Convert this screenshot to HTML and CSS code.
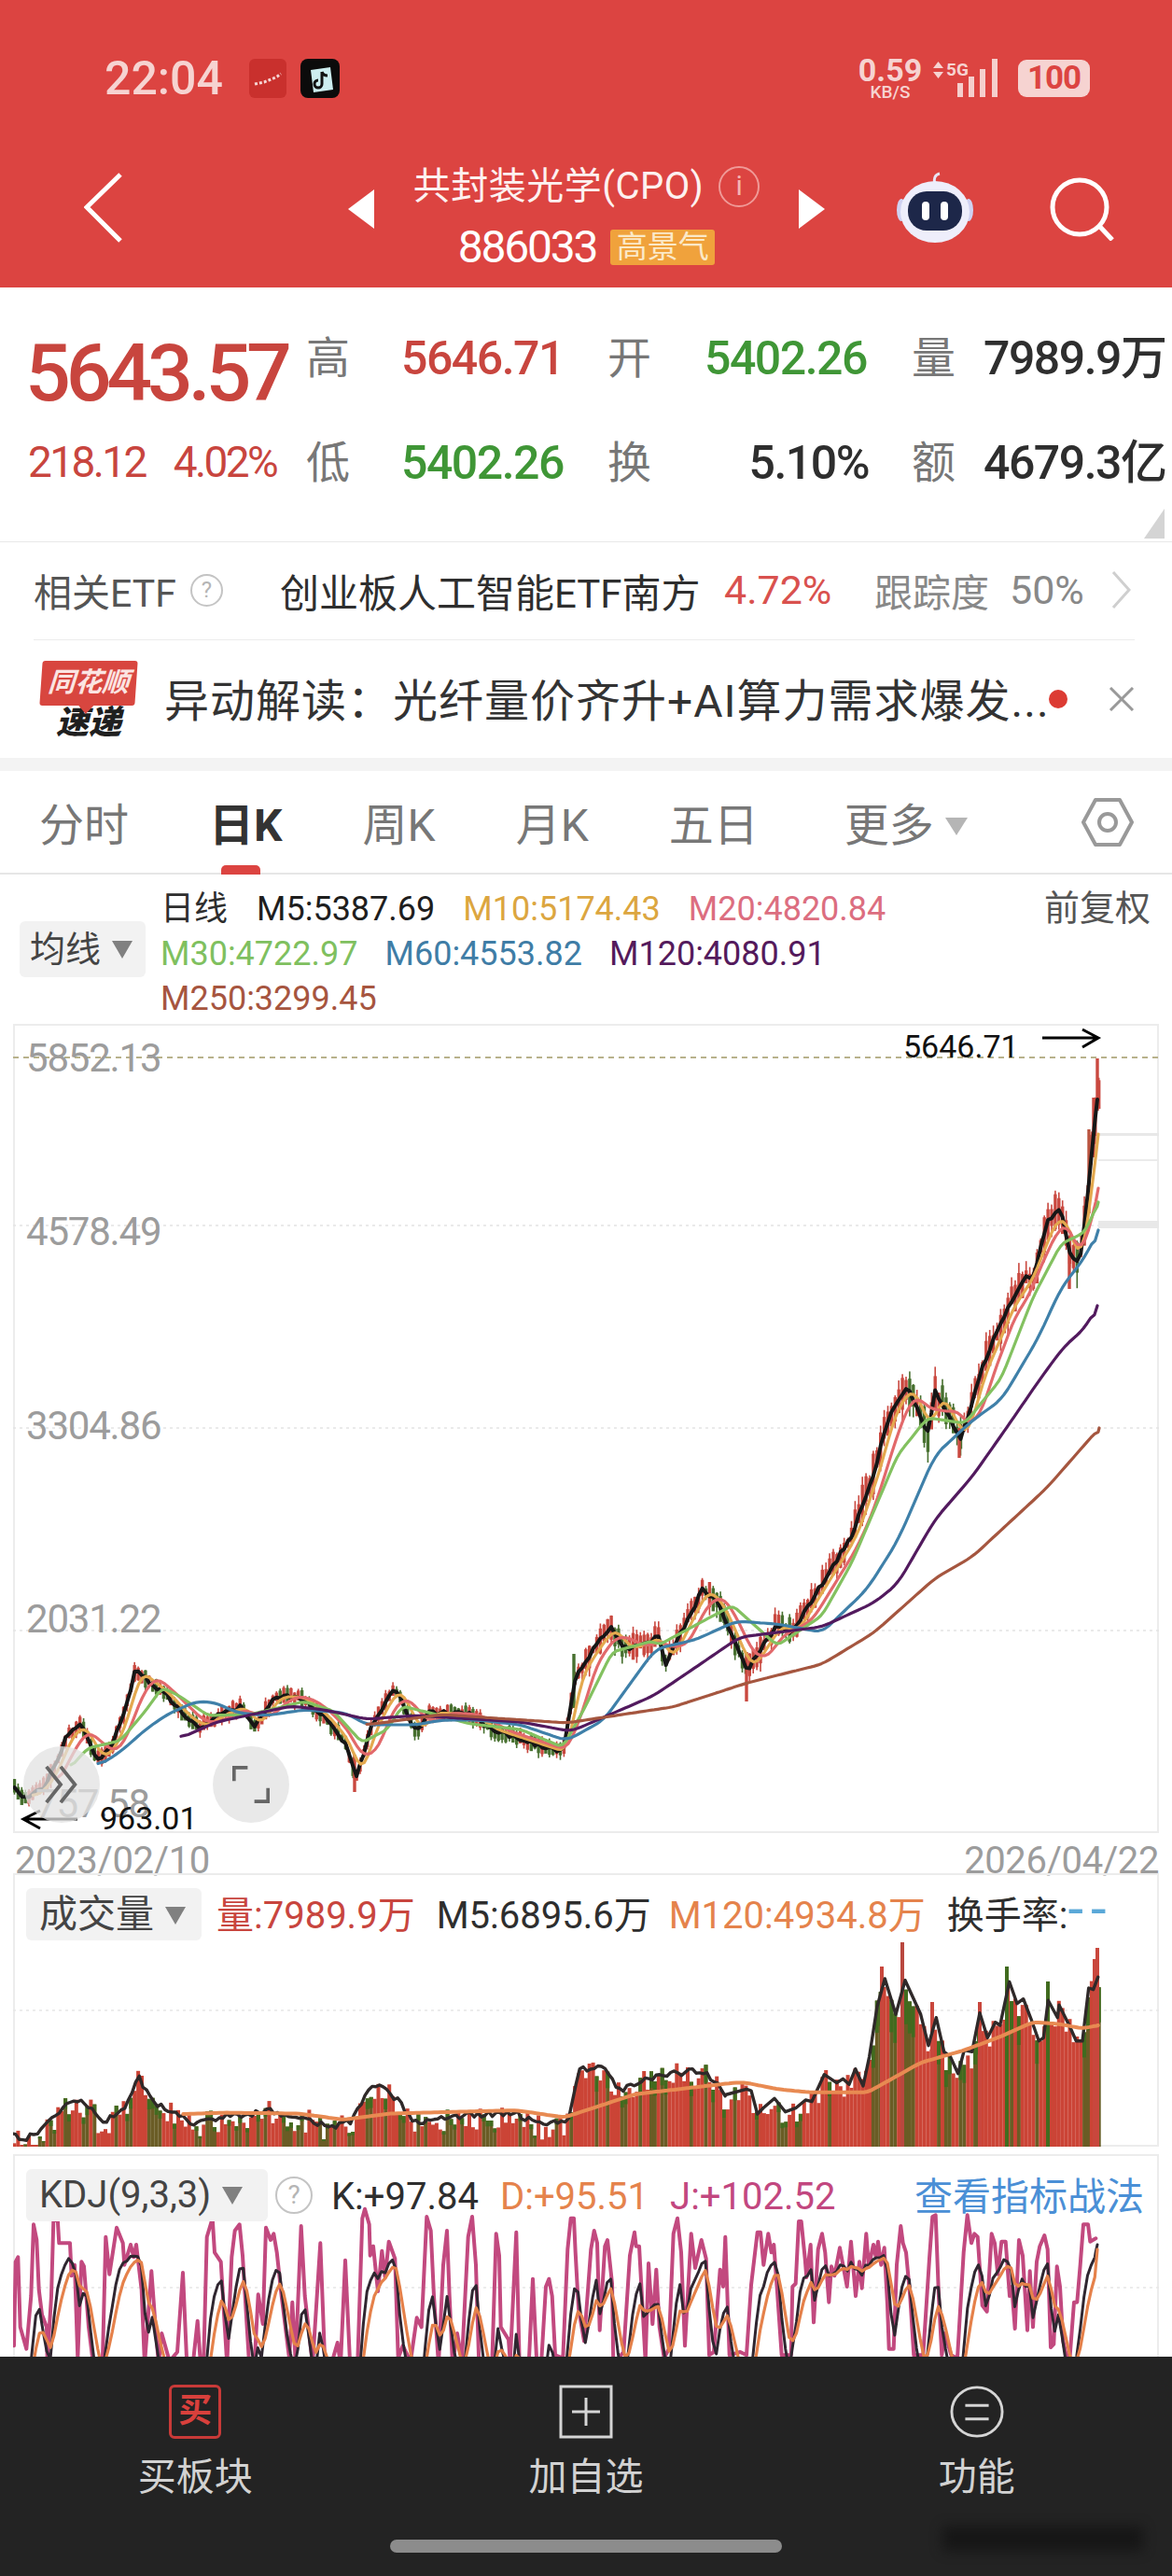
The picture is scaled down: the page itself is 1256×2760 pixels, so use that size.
FILE: index.html
```html
<!DOCTYPE html>
<html lang="zh-CN">
<head>
  <meta charset="UTF-8" />
  <meta name="viewport" content="width=device-width, initial-scale=1.0" />
  <title>共封装光学(CPO)</title>
  <link rel="stylesheet" href="styles.css">
</head>
<body>
  <div class="page">
    <header class="top">
      <div class="status">
        <span class="clock">22:04</span>
        <svg class="app-icon app-red" viewBox="0 0 40 42">
          <rect width="40" height="42" rx="6" fill="#c9302d" />
          <path d="M6 27l5-1 5-1 5-2 5-2 4-2 4-3" fill="none" stroke="#f6d5d3" stroke-width="3" stroke-dasharray="3 2" />
        </svg>
        <svg class="app-icon app-shop" viewBox="0 0 42 42">
          <rect width="42" height="42" rx="8" fill="#0b0b0b" />
          <path d="M11 12l21-3 3 24-21 3z" fill="#cdeef0" />
          <path d="M23 14v13a4 4 0 1 1-4-4M23 14c1 3 3 4 6 4" fill="none" stroke="#111" stroke-width="3" />
        </svg>
        <div class="status-right">
          <div class="speed"><b>0.59</b><small>KB/S</small></div>
          <div class="net">
            <svg class="net-arrows" viewBox="0 0 11 18"><path d="M5.500 0L11 7H0zM5.500 18L0 11h11z" fill="#f6d3d1" /></svg>
            <span class="net-label">5G</span>
          </div>
          <svg class="signal" viewBox="0 0 44 41">
            <rect x="0" y="26" width="6" height="15" fill="#f5cfcd" />
            <rect x="12" y="19" width="6" height="22" fill="#f5cfcd" />
            <rect x="24" y="11" width="6" height="30" fill="#f5cfcd" />
            <rect x="37" y="0" width="6" height="41" fill="#f5cfcd" />
          </svg>
          <div class="battery">100</div>
        </div>
      </div>
      <nav class="nav">
        <svg class="back" viewBox="0 0 41 75"><path d="M39 2L3 37l36 36" fill="none" stroke="#fff" stroke-width="5" /></svg>
        <div class="tri-left"></div>
        <div class="title-block">
          <div class="title-row">
            <span class="title">共封装光学(CPO)</span>
            <span class="info">i</span>
          </div>
          <div class="code-row">
            <span class="code">886033</span>
            <span class="badge">高景气</span>
          </div>
        </div>
        <div class="tri-right"></div>
        <svg class="robot" viewBox="0 0 84 78">
          <path d="M42 14c-2-5 0-10 5-11" fill="none" stroke="#e8e4f5" stroke-width="3" />
          <ellipse cx="6" cy="42" rx="5" ry="12" fill="#cfd2f2" />
          <ellipse cx="78" cy="42" rx="5" ry="12" fill="#cfd2f2" />
          <ellipse cx="42" cy="44" rx="37" ry="33" fill="#eeeefb" />
          <rect x="13" y="22" width="58" height="42" rx="20" fill="#1d2749" />
          <rect x="28" y="33" width="8" height="20" rx="4" fill="#fff" />
          <rect x="48" y="33" width="8" height="20" rx="4" fill="#fff" />
        </svg>
        <svg class="search" viewBox="0 0 70 68">
          <circle cx="33" cy="32" r="29" fill="none" stroke="#fff" stroke-width="5" />
          <path d="M54 52l14 15" stroke="#fff" stroke-width="5" />
        </svg>
      </nav>
    </header>

    <section class="quote">
      <div class="big up">5643.57</div>
      <div class="lbl">高</div>
      <div class="val up">5646.71</div>
      <div class="lbl">开</div>
      <div class="val down">5402.26</div>
      <div class="lbl">量</div>
      <div class="val dark">7989.9万</div>
      <div class="change up"><span>218.12</span><span>4.02%</span></div>
      <div class="lbl">低</div>
      <div class="val down">5402.26</div>
      <div class="lbl">换</div>
      <div class="val dark right">5.10%</div>
      <div class="lbl">额</div>
      <div class="val dark">4679.3亿</div>
      <div class="corner"></div>
    </section>

    <section class="etf">
      <span class="etf-label">相关ETF</span>
      <span class="help help-etf">?</span>
      <span class="etf-name">创业板人工智能ETF南方</span>
      <span class="etf-pct">4.72%</span>
      <span class="etf-track">跟踪度</span>
      <span class="etf-rate">50%</span>
      <svg class="etf-more" viewBox="0 0 21 40"><path d="M2 1l17 19L2 39" fill="none" stroke="#cfcfcf" stroke-width="3" /></svg>
    </section>

    <section class="news">
      <div class="logo">
        <div class="logo-tag">同花顺</div>
        <div class="logo-text">速递</div>
      </div>
      <span class="news-text">异动解读：光纤量价齐升+AI算力需求爆发...</span>
      <span class="dot"></span>
      <svg class="close" viewBox="0 0 28 26"><path d="M2 1l24 24M26 1L2 25" stroke="#999" stroke-width="3" /></svg>
    </section>

    <div class="gap"></div>

    <nav class="tabs">
      <span class="tab">分时</span>
      <span class="tab active">日K</span>
      <span class="tab">周K</span>
      <span class="tab">月K</span>
      <span class="tab">五日</span>
      <span class="tab more">更多<i class="tri tri-more"></i></span>
      <svg class="hex" viewBox="0 0 56 54">
        <path d="M15 3h26l13 24-13 24H15L2 27z" fill="none" stroke="#999" stroke-width="4" stroke-linejoin="round" />
        <circle cx="28" cy="27" r="9" fill="none" stroke="#999" stroke-width="4" />
      </svg>
    </nav>

    <section class="legend">
      <div class="select select-ma">均线<i class="tri"></i></div>
      <div class="ma-list">
        <div class="ma-row">
          <span class="dark">日线</span>
          <span class="m5">M5:5387.69</span>
          <span class="m10">M10:5174.43</span>
          <span class="m20">M20:4820.84</span>
        </div>
        <div class="ma-row">
          <span class="m30">M30:4722.97</span>
          <span class="m60">M60:4553.82</span>
          <span class="m120">M120:4080.91</span>
        </div>
        <div class="ma-row">
          <span class="m250">M250:3299.45</span>
        </div>
      </div>
      <span class="fq">前复权</span>
    </section>

    <section class="panel price-panel">
      <svg id="priceChart" class="plot" viewBox="14 1097 1228 867">
        <text class="axis" x="28" y="1148">5852.13</text>
        <text class="axis" x="28" y="1334">4578.49</text>
        <text class="axis" x="28" y="1542">3304.86</text>
        <text class="axis" x="28" y="1749">2031.22</text>
        <text class="axis" x="38" y="1947">757.58</text>
        <text class="mark" x="968" y="1133">5646.71</text>
        <text class="mark" x="107" y="1960">963.01</text>
        <path d="M1117 1112h59M1160 1103l17 9-17 10" fill="none" stroke="#000" stroke-width="3" />
        <path d="M83 1949H26M43 1940l-18 9 18 10" fill="none" stroke="#000" stroke-width="3" />
      </svg>
      <div class="round round-left">
        <svg viewBox="0 0 40 46"><path d="M3 3l16 20L3 43M19 3l16 20-16 20" fill="none" stroke="#666" stroke-width="4" /></svg>
      </div>
      <div class="round round-right">
        <svg viewBox="0 0 44 44"><path d="M2 18V2h16M42 26v16H26" fill="none" stroke="#666" stroke-width="4" /></svg>
      </div>
    </section>

    <div class="dates"><span>2023/02/10</span><span>2026/04/22</span></div>

    <section class="panel vol-panel">
      <svg id="volChart" class="plot" viewBox="14 2007 1228 293"></svg>
      <div class="panel-head">
        <div class="select select-vol">成交量<i class="tri"></i></div>
        <span class="up">量:7989.9万</span>
        <span class="dark vol-m5">M5:6895.6万</span>
        <span class="orange">M120:4934.8万</span>
        <span class="dark">换手率:<span class="dashes">--</span></span>
      </div>
    </section>

    <section class="panel kdj-panel">
      <svg id="kdjChart" class="plot" viewBox="14 2308 1228 217"></svg>
      <div class="panel-head">
        <div class="select select-kdj">KDJ(9,3,3)<i class="tri"></i></div>
        <span class="help help-kdj">?</span>
        <span class="dark">K:+97.84</span>
        <span class="orange">D:+95.51</span>
        <span class="pink">J:+102.52</span>
        <span class="link">查看指标战法</span>
      </div>
    </section>

    <footer class="bottom">
      <div class="action">
        <span class="buy-icon">买</span>
        <span>买板块</span>
      </div>
      <div class="action">
        <svg class="act-icon" viewBox="0 0 58 58">
          <rect x="2" y="2" width="54" height="54" fill="none" stroke="#d5d5d5" stroke-width="3" />
          <path d="M29 14v30M14 29h30" stroke="#d5d5d5" stroke-width="3" />
        </svg>
        <span>加自选</span>
      </div>
      <div class="action">
        <svg class="act-icon" viewBox="0 0 60 58">
          <ellipse cx="30" cy="29" rx="28" ry="27" fill="none" stroke="#d5d5d5" stroke-width="3" />
          <path d="M17 22h26M17 37h26" stroke="#d5d5d5" stroke-width="3" />
        </svg>
        <span>功能</span>
      </div>
      <div class="home"></div>
      <div class="smudge"></div>
    </footer>
  </div>
  <script src="chart.js"></script>
</body>
</html>
```
FILE: styles.css
```css
* {
  box-sizing: border-box;
}

body {
  margin: 0;
  background: #fff;
  font-family: Roboto, "Noto Sans CJK SC", sans-serif;
  color: #333;
}

.page {
  width: 1256px;
  height: 2760px;
  overflow: hidden;
  display: flex;
  flex-direction: column;
}

.up { color: #c8453e; }
.down { color: #3f9636; }
.dark { color: #2e2e2e; }
.orange { color: #e5834c; }
.pink { color: #c2477f; }

/* header */
.top {
  height: 308px;
  flex: none;
  background: #dc4441;
  padding-top: 63px;
}

.status {
  height: 42px;
  display: flex;
  align-items: center;
  padding-left: 112px;
  color: #f6d3d1;
}

.clock {
  font-size: 50px;
  font-weight: 500;
  line-height: 42px;
  width: 155px;
}

.app-icon {
  width: 40px;
  height: 42px;
}

.app-shop {
  margin-left: 15px;
  width: 42px;
}

.status-right {
  margin-left: auto;
  display: flex;
  align-items: flex-start;
  height: 42px;
  padding-right: 88px;
}

.speed {
  width: 76px;
  margin-right: 8px;
  text-align: center;
  display: flex;
  flex-direction: column;
}

.speed b {
  font-size: 34px;
  line-height: 24px;
  font-weight: 700;
}

.speed small {
  font-size: 19px;
  line-height: 20px;
  font-weight: 500;
  margin-top: 2px;
}

.net {
  width: 26px;
  display: flex;
  align-items: center;
  height: 20px;
  margin-top: 2px;
  gap: 3px;
}

.net-arrows {
  width: 11px;
  height: 18px;
  flex: none;
}

.net-label {
  font-size: 19px;
  font-weight: 700;
  line-height: 20px;
  white-space: nowrap;
}

.signal {
  width: 44px;
  height: 41px;
}

.battery {
  margin-left: 21px;
  width: 77px;
  height: 40px;
  margin-top: 1px;
  border-radius: 9px;
  background: #f6d3d1;
  color: #dc4441;
  font-size: 35px;
  font-weight: 700;
  letter-spacing: -1px;
  line-height: 40px;
  text-align: center;
}

.nav {
  height: 100px;
  margin-top: 75px;
  display: flex;
  padding-left: 90px;
}

.back {
  width: 41px;
  height: 75px;
  margin-top: 5px;
}

.tri-left,
.tri-right {
  width: 0;
  height: 0;
  margin-top: 23px;
  border-top: 21px solid transparent;
  border-bottom: 21px solid transparent;
}

.tri-left {
  margin-left: 242px;
  border-right: 28px solid #fff;
}

.tri-right {
  border-left: 28px solid #fff;
}

.title-block {
  width: 455px;
  display: flex;
  flex-direction: column;
  align-items: center;
  color: #fff;
}

.title-row {
  display: flex;
  align-items: center;
  height: 40px;
}

.title {
  font-size: 40px;
  line-height: 40px;
  white-space: nowrap;
  letter-spacing: 0.5px;
  color: #fdf1f0;
}

.info {
  width: 44px;
  height: 44px;
  margin-left: 16px;
  border: 2px solid #f09a97;
  border-radius: 50%;
  color: #f5b5b3;
  font-size: 30px;
  line-height: 38px;
  text-align: center;
}

.code-row {
  margin-top: 26px;
  display: flex;
  align-items: center;
}

.code {
  font-size: 48px;
  line-height: 38px;
  letter-spacing: -2.2px;
}

.badge {
  margin-left: 15px;
  width: 112px;
  height: 38px;
  border-radius: 3px;
  background: #f0a23c;
  color: #fbe9c8;
  font-size: 33px;
  line-height: 38px;
  text-align: center;
}

.robot {
  width: 84px;
  height: 78px;
  margin-left: 76px;
  margin-top: 3px;
}

.search {
  width: 70px;
  height: 68px;
  margin-left: 80px;
  margin-top: 10px;
}

/* quote block */
.quote {
  height: 273px;
  flex: none;
  position: relative;
  padding: 20px 0 0 30px;
  border-bottom: 1px solid #e8e8e8;
  display: grid;
  grid-template-columns: 298px 102px 221px 104px 222px 77px 1fr;
  grid-template-rows: 112px 112px;
  align-items: center;
}

.big {
  font-size: 86px;
  font-weight: 500;
  line-height: 86px;
  letter-spacing: -5.2px;
  padding-top: 32px;
  margin-left: -3px;
}

.change {
  display: flex;
  gap: 30px;
  font-size: 46px;
  letter-spacing: -2.6px;
  line-height: 50px;
  margin-top: -2px;
}

.lbl {
  font-size: 47px;
  line-height: 56px;
  color: #777;
}

.val {
  font-size: 50px;
  line-height: 56px;
  font-weight: 500;
  letter-spacing: -1.5px;
  white-space: nowrap;
}

.val.right {
  text-align: right;
  padding-right: 46px;
}

.corner {
  position: absolute;
  right: 8px;
  bottom: 3px;
  width: 0;
  height: 0;
  border-left: 22px solid transparent;
  border-bottom: 32px solid #d4d4d4;
}

/* etf row */
.etf {
  height: 105px;
  flex: none;
  margin: 0 40px;
  border-bottom: 1px solid #ececec;
  display: flex;
  align-items: center;
  padding-bottom: 2px;
  margin-left: 36px;
}

.etf-label {
  font-size: 41px;
  color: #555;
  width: 168px;
  white-space: nowrap;
}

.help {
  border-radius: 50%;
  border: 2px solid #c4c4c4;
  color: #b5b5b5;
  text-align: center;
  flex: none;
}

.help-etf {
  width: 35px;
  height: 35px;
  font-size: 24px;
  line-height: 31px;
}

.etf-name {
  margin-left: 61px;
  width: 476px;
  font-size: 42px;
  white-space: nowrap;
  color: #2e2e2e;
}

.etf-pct {
  width: 161px;
  font-size: 43px;
  color: #d9514e;
}

.etf-track {
  width: 145px;
  font-size: 41px;
  color: #888;
  white-space: nowrap;
}

.etf-rate {
  width: 109px;
  font-size: 43px;
  color: #888;
}

.etf-more {
  width: 21px;
  height: 40px;
  flex: none;
}

.news {
  height: 126px;
  flex: none;
  display: flex;
  align-items: center;
  padding-left: 44px;
}

.logo {
  width: 102px;
  height: 82px;
  flex: none;
  text-align: center;
}

.logo-tag {
  height: 48px;
  background: #d8463f;
  border-radius: 3px;
  transform: skewX(-4deg);
  color: #fbe4e2;
  font-size: 29px;
  font-weight: 700;
  font-style: italic;
  line-height: 46px;
  white-space: nowrap;
  position: relative;
}

.logo-tag::after {
  content: "";
  position: absolute;
  left: 42px;
  top: 48px;
  border-left: 8px solid transparent;
  border-right: 8px solid transparent;
  border-top: 9px solid #d8463f;
}

.logo-text {
  margin-top: 1px;
  font-size: 35px;
  font-weight: 900;
  font-style: italic;
  line-height: 36px;
  color: #1f1f1f;
}

.news-text {
  margin-left: 30px;
  padding-top: 6px;
  width: 948px;
  font-size: 48px;
  line-height: 60px;
  letter-spacing: 1px;
  color: #333;
  white-space: nowrap;
}

.dot {
  width: 20px;
  height: 20px;
  border-radius: 50%;
  background: #dc3b33;
}

.close {
  width: 28px;
  height: 26px;
  margin-left: 44px;
}

.gap {
  height: 14px;
  flex: none;
  background: #f3f3f3;
}

/* tabs */
.tabs {
  height: 111px;
  flex: none;
  display: flex;
  align-items: flex-start;
  gap: 86px;
  padding: 31px 0 0 42px;
  border-bottom: 2px solid #e6e6e6;
  position: relative;
}

.tab {
  font-size: 48px;
  line-height: 56px;
  color: #777;
  white-space: nowrap;
  position: relative;
}

.tab.active {
  color: #333;
  font-weight: 700;
}

.tab.active::after {
  content: "";
  position: absolute;
  left: 13px;
  top: 70px;
  width: 42px;
  height: 10px;
  border-radius: 5px 5px 0 0;
  background: #dc4441;
}

.tab.more {
  margin-left: 6px;
}

.tri {
  display: inline-block;
  width: 0;
  height: 0;
  margin-left: 12px;
  vertical-align: 3px;
  border-left: 11px solid transparent;
  border-right: 11px solid transparent;
  border-top: 19px solid #808080;
}

.tri-more {
  border-left-width: 12px;
  border-right-width: 12px;
  border-top-color: #b5b5b5;
  vertical-align: 6px;
}

.hex {
  position: absolute;
  left: 1159px;
  top: 28px;
  width: 56px;
  height: 54px;
}

/* moving average legend */
.legend {
  height: 160px;
  flex: none;
  position: relative;
  padding: 13px 0 0 172px;
}

.ma-list {
  font-size: 36px;
  line-height: 48px;
  white-space: nowrap;
}

.ma-row {
  display: flex;
  gap: 29px;
}

.ma-row:first-child {
  gap: 30px;
}

.ma-row:first-child .m5 {
  margin-left: 1px;
}

.ma-list .m5 { color: #1e1e1e; }
.m10 { color: #dca640; }
.m20 { color: #dc6e80; }
.m30 { color: #7fc05f; }
.m60 { color: #3f7da6; }
.m120 { color: #541a5c; }
.m250 { color: #a6553f; }

.select {
  background: #f2f2f2;
  border-radius: 6px;
  color: #444;
  white-space: nowrap;
  line-height: 56px;
  height: 56px;
  position: relative;
  z-index: 2;
  flex: none;
}

.select-ma {
  position: absolute;
  left: 21px;
  top: 50px;
  width: 135px;
  height: 60px;
  line-height: 60px;
  padding-left: 11px;
  font-size: 38px;
}

.fq {
  position: absolute;
  left: 1119px;
  top: 12px;
  font-size: 38px;
  line-height: 48px;
  color: #555;
}

/* chart panels */
.panel {
  flex: none;
  position: relative;
  margin-left: 14px;
  width: 1228px;
  border: 2px solid #ececec;
}

.plot {
  position: absolute;
  left: -2px;
  top: -2px;
  width: 1228px;
}

.axis {
  font-size: 42px;
  letter-spacing: -1.2px;
  fill: #9c9c9c;
}

.mark {
  font-size: 34px;
  fill: #111;
}

.price-panel {
  height: 867px;
}

.price-panel .plot {
  height: 867px;
}

.round {
  position: absolute;
  top: 772px;
  width: 82px;
  height: 82px;
  border-radius: 50%;
  background: rgba(226, 226, 226, 0.75);
  display: flex;
  align-items: center;
  justify-content: center;
}

.round-left {
  left: 9px;
}

.round-right {
  left: 212px;
}

.round svg {
  width: 40px;
  height: 44px;
}

.dates {
  height: 43px;
  flex: none;
  padding: 0 14px 0 16px;
  display: flex;
  justify-content: space-between;
  align-items: flex-end;
  font-size: 40px;
  line-height: 40px;
  letter-spacing: -0.4px;
  color: #9c9c9c;
}

.dates span {
  margin-bottom: -7px;
}

.vol-panel {
  height: 293px;
}

.vol-panel .plot {
  height: 293px;
}

.kdj-panel {
  height: 217px;
  margin-top: 8px;
  border-bottom: 0;
}

.kdj-panel .plot {
  height: 217px;
}

.panel-head {
  position: relative;
  display: flex;
  align-items: center;
  gap: 23px;
  padding: 12px 0 0 12px;
  font-size: 40px;
  line-height: 56px;
  white-space: nowrap;
}

.panel-head > span {
  padding-top: 4px;
}

.select-vol {
  width: 188px;
  padding-left: 14px;
  font-size: 41px;
  margin-right: -7px;
}

.vol-m5 {
  margin-right: -4px;
}

.select-kdj {
  width: 259px;
  padding-left: 14px;
  font-size: 40px;
}

.panel-head > .help-kdj {
  width: 40px;
  height: 40px;
  padding: 0;
  font-size: 28px;
  line-height: 36px;
  margin-left: -15px;
  margin-right: -3px;
}

.dashes {
  color: #5aa8d8;
  font-size: 60px;
  line-height: 0;
  letter-spacing: 8px;
}

.panel-head > .link {
  margin-left: auto;
  margin-right: 14px;
  font-size: 41px;
  color: #4a8fd6;
}

/* bottom bar */
.bottom {
  height: 235px;
  flex: none;
  position: relative;
  background: #232323;
  display: grid;
  grid-template-columns: repeat(3, 1fr);
  padding-top: 30px;
}

.action {
  display: flex;
  flex-direction: column;
  align-items: center;
  font-size: 41px;
  line-height: 56px;
  color: #d2d2d2;
}

.action > span:last-child {
  margin-top: 13px;
}

.act-icon {
  width: 58px;
  height: 58px;
}

.buy-icon {
  width: 56px;
  height: 58px;
  border: 3px solid #c83a38;
  border-radius: 6px;
  color: #d8403c;
  font-size: 36px;
  font-weight: 700;
  line-height: 50px;
  text-align: center;
}

.home {
  position: absolute;
  left: 418px;
  top: 196px;
  width: 420px;
  height: 14px;
  border-radius: 7px;
  background: #8c8c8c;
}

.smudge {
  position: absolute;
  left: 1010px;
  top: 182px;
  width: 215px;
  height: 26px;
  background: #0d0d0d;
  opacity: 0.6;
  filter: blur(7px);
}
```
FILE: chart.js
```js
var NS = "http://www.w3.org/2000/svg";
var STEP = 3.9;
var BAR_COUNT = 299;

// simple seeded random so the picture is the same on every load
var seed = 20260422;
function rnd() {
  seed = (seed * 1664525 + 1013904223) % 4294967296;
  return seed / 4294967296;
}

function add(svg, tag, attrs) {
  var el = document.createElementNS(NS, tag);
  for (var k in attrs) el.setAttribute(k, attrs[k]);
  svg.appendChild(el);
  return el;
}

function interp(points, x) {
  if (x <= points[0][0]) return points[0][1];
  for (var i = 1; i < points.length; i++) {
    if (x <= points[i][0]) {
      var a = points[i - 1], b = points[i];
      return a[1] + (b[1] - a[1]) * (x - a[0]) / (b[0] - a[0]);
    }
  }
  return points[points.length - 1][1];
}

// resample a hand traced line every few px and round it off a little
function resample(points, span) {
  var out = [];
  var first = points[0][0], last = points[points.length - 1][0];
  for (var x = first; x < last; x += STEP) out.push([x, interp(points, x)]);
  out.push(points[points.length - 1]);
  return out.map(function (p, i) {
    var sum = 0, n = 0;
    for (var j = Math.max(0, i - span); j <= Math.min(out.length - 1, i + span); j++) {
      sum += out[j][1];
      n++;
    }
    return [p[0], i === out.length - 1 ? p[1] : sum / n];
  });
}

// trailing average, the lag is what separates M10 and M20 from M5
function lagged(points, win, startX, tail) {
  var base = resample(points, 0);
  var out = [];
  base.forEach(function (p, i) {
    if (p[0] < startX || p[0] >= tail[0][0]) return;
    var sum = 0, n = 0;
    for (var j = Math.max(0, i - win); j <= i; j++) {
      sum += base[j][1];
      n++;
    }
    out.push([p[0], sum / n]);
  });
  return out.concat(tail);
}

function line(svg, points, color, width) {
  var d = points.map(function (p) { return p[0].toFixed(1) + "," + p[1].toFixed(1); }).join(" ");
  add(svg, "polyline", {
    points: d,
    fill: "none",
    stroke: color,
    "stroke-width": width,
    "stroke-linejoin": "round",
    "stroke-linecap": "round"
  });
}

function hline(svg, y, color, dash, width) {
  add(svg, "line", {
    x1: 14, x2: 1242, y1: y, y2: y,
    stroke: color,
    "stroke-width": width || 1.5,
    "stroke-dasharray": dash
  });
}

function drawPrice() {
  var svg = document.getElementById("priceChart");
  var labels = Array.prototype.slice.call(svg.childNodes);

  var close = [[16, 1915], [25, 1927], [45, 1917], [62, 1887], [71, 1860], [87, 1848], [100, 1877], [107, 1885], [120, 1870], [132, 1840], [145, 1790], [158, 1800], [179, 1817], [196, 1837], [214, 1850], [237, 1837], [259, 1828], [272, 1850], [295, 1818], [321, 1818], [348, 1840], [370, 1867], [382, 1905], [397, 1853], [422, 1808], [433, 1827], [446, 1857], [460, 1835], [504, 1837], [527, 1853], [558, 1863], [603, 1878], [616, 1800], [634, 1770], [654, 1743], [670, 1767], [700, 1757], [705, 1749], [713, 1783], [753, 1703], [769, 1717], [801, 1789], [833, 1740], [849, 1749], [881, 1697], [913, 1645], [937, 1576], [954, 1513], [973, 1485], [994, 1536], [1002, 1490], [1030, 1542], [1052, 1467], [1077, 1407], [1097, 1370], [1108, 1367], [1123, 1307], [1137, 1297], [1148, 1347], [1157, 1350], [1163, 1307], [1172, 1213], [1176, 1178]];
  var m10Tail = [[1057, 1470], [1087, 1400], [1107, 1370], [1123, 1330], [1133, 1307], [1143, 1310], [1157, 1347], [1167, 1307], [1172, 1250], [1177, 1215]];
  var m20Tail = [[1063, 1477], [1087, 1413], [1103, 1387], [1120, 1347], [1133, 1320], [1143, 1313], [1157, 1340], [1167, 1320], [1177, 1273]];
  var m30 = [[76, 1893], [94, 1873], [129, 1865], [156, 1833], [174, 1808], [192, 1817], [223, 1838], [268, 1837], [326, 1823], [357, 1833], [388, 1867], [415, 1853], [431, 1828], [460, 1835], [504, 1847], [558, 1853], [603, 1872], [625, 1833], [656, 1770], [700, 1758], [705, 1763], [785, 1720], [833, 1763], [881, 1731], [913, 1674], [962, 1559], [994, 1519], [1034, 1525], [1073, 1477], [1107, 1390], [1137, 1333], [1163, 1320], [1177, 1288]];
  var m60 = [[105, 1892], [129, 1877], [156, 1853], [179, 1837], [210, 1823], [230, 1824], [254, 1835], [286, 1838], [326, 1832], [370, 1835], [393, 1848], [446, 1848], [473, 1843], [513, 1843], [558, 1848], [607, 1865], [647, 1843], [700, 1770], [705, 1766], [745, 1757], [789, 1737], [833, 1740], [881, 1749], [929, 1703], [962, 1651], [1002, 1559], [1042, 1522], [1074, 1499], [1087, 1477], [1113, 1433], [1137, 1380], [1163, 1347], [1177, 1318]];
  var m120 = [[194, 1862], [232, 1845], [312, 1828], [348, 1832], [393, 1842], [446, 1838], [558, 1845], [612, 1855], [700, 1817], [721, 1803], [793, 1754], [881, 1743], [937, 1717], [962, 1697], [1002, 1628], [1042, 1582], [1082, 1525], [1115, 1477], [1140, 1443], [1163, 1423], [1176, 1399]];
  var m250 = [[393, 1848], [473, 1837], [607, 1846], [700, 1832], [721, 1829], [801, 1803], [881, 1783], [937, 1749], [1002, 1691], [1042, 1668], [1122, 1594], [1178, 1530]];

  hline(svg, 1313, "#e4e4e4", "3 4");
  hline(svg, 1530, "#e4e4e4", "3 4");
  hline(svg, 1747, "#e4e4e4", "3 4");
  hline(svg, 1133, "#b8b28c", "6 5", 2);
  add(svg, "rect", { x: 1177, y: 1214, width: 65, height: 3, fill: "#e8e8e8" });
  add(svg, "rect", { x: 1177, y: 1242, width: 65, height: 2, fill: "#ebebeb" });
  add(svg, "rect", { x: 1177, y: 1308, width: 65, height: 8, fill: "#e8e8e8" });

  var prev = close[0][1];
  var jittered = [];
  for (var i = 0; i < BAR_COUNT; i++) {
    var x = 15.5 + i * STEP;
    var cy = interp(close, x);
    var rising = cy < prev - 1 || (Math.abs(cy - prev) <= 1 && rnd() > 0.5);
    prev = cy;
    var amp = x > 900 ? 19 : x > 620 ? 12 : 7;
    var top = cy - 3 - rnd() * amp;
    var bottom = cy + 3 + rnd() * amp;
    var color = rising || rnd() < 0.2 ? "#c9483f" : "#47702f";
    add(svg, "rect", { x: x - 0.8, y: top - rnd() * amp * 0.6, width: 1.6, height: bottom - top + rnd() * amp, fill: color });
    add(svg, "rect", { x: x - 1.7, y: top, width: 3.4, height: bottom - top, fill: color });
    jittered.push([x, cy + (rnd() - 0.5) * (x > 1170 ? 0 : 5)]);
  }
  jittered[jittered.length - 1] = close[close.length - 1];

  // long wicks that stand out from the pack
  [[380, 1880, 1920, "#c9483f"], [615, 1772, 1830, "#47702f"], [800, 1770, 1823, "#c9483f"], [1028, 1530, 1562, "#c9483f"], [1146, 1340, 1381, "#c9483f"], [1176, 1134, 1190, "#c9483f"], [1172, 1176, 1240, "#c9483f"], [1167, 1210, 1300, "#b9533f"]].forEach(function (w) {
    add(svg, "rect", { x: w[0] - 1.7, y: w[1], width: 3.4, height: w[2] - w[1], fill: w[3] });
  });

  line(svg, jittered, "#161616", 4);
  line(svg, resample(lagged(close, 3, 34, m10Tail), 1), "#e4a94f", 3.2);
  line(svg, resample(lagged(close, 7, 62, m20Tail), 1), "#e2696b", 3.2);
  line(svg, resample(m30, 1), "#83c160", 3.2);
  line(svg, resample(m60, 2), "#3f80a9", 3.2);
  line(svg, resample(m120, 2), "#521a5e", 3.2);
  line(svg, resample(m250, 2), "#a5563f", 3.2);

  // keep the axis texts above the bars and lines
  labels.forEach(function (node) { svg.appendChild(node); });
}

// lines were traced on zoomed crops, this turns crop coords back into page px
function fromCrop(list, left, top, sx, sy) {
  return list.map(function (p) { return [left + p[0] / sx, top + p[1] / sy]; });
}

function drawVolume() {
  var svg = document.getElementById("volChart");

  var head = fromCrop([[16, 620], [35, 625], [60, 600], [90, 550], [115, 550], [140, 590], [165, 560], [185, 495], [210, 550], [240, 575], [260, 595], [300, 580], [360, 565], [400, 580], [440, 600], [470, 590], [500, 505], [530, 540], [555, 590], [620, 575], [690, 570], [720, 595], [760, 590], [775, 480], [800, 465], [830, 520], [880, 490], [940, 480], [970, 530]], 0, 1980, 1.248, 2.01);
  var tail = fromCrop([[0, 505], [15, 510], [35, 585], [55, 565], [90, 535], [125, 578], [160, 565], [190, 540], [210, 545], [250, 458], [290, 485], [310, 472], [330, 490], [350, 440], [375, 495], [395, 400], [420, 240], [445, 150], [480, 265], [510, 155], [560, 265], [585, 365], [610, 275], [635, 385], [655, 400], [680, 455], [700, 380], [725, 385], [750, 260], [775, 340], [800, 290], [815, 300], [845, 160], [870, 230], [890, 215], [915, 280], [940, 350], [955, 340], [970, 220], [1000, 275], [1005, 235], [1040, 305], [1060, 350], [1080, 350], [1100, 180], [1115, 185], [1130, 145]], 800, 2070, 3, 3);
  var m5 = resample(head, 0).map(function (p) { return [p[0], p[1] + (rnd() - 0.5) * 7]; }).concat(tail);

  var m120 = fromCrop([[245, 573], [300, 570], [400, 572], [460, 585], [520, 572], [690, 565], [755, 580], [850, 530], [985, 505]], 0, 1980, 1.248, 2.01)
    .concat(fromCrop([[0, 485], [100, 505], [200, 515], [390, 515], [480, 465], [560, 420], [700, 380], [820, 335], [920, 290], [1000, 295], [1080, 310], [1130, 300]], 800, 2070, 3, 3));

  hline(svg, 2154, "#e6e6e6", "3 4");

  for (var i = 0; i < BAR_COUNT; i++) {
    var x = 15.5 + i * STEP;
    var level = interp(m5, x);
    var y = Math.min(2298, level - 10 + rnd() * 28);
    var dull = rnd() < (x > 800 ? 0.27 : 0.38);
    add(svg, "rect", { x: x - 2, y: y, width: 4, height: 2300 - y, fill: dull ? "#6a5c25" : "#cb4436" });
    if (dull) add(svg, "rect", { x: x - 2, y: y, width: 4, height: (2300 - y) * 0.22, fill: "#416b1f" });
  }

  // the tallest bars stick out far above the M5 line
  [[967, 2081, "#b9483f"], [945, 2107, "#c9473d"], [1079, 2107, "#416b1f"], [1123, 2123, "#416b1f"], [999, 2145, "#c9473d"], [1050, 2145, "#c9473d"], [1173, 2099, "#c9473d"], [1176, 2087, "#c9473d"]].forEach(function (b) {
    add(svg, "rect", { x: b[0] - 2, y: b[1], width: 4, height: 2300 - b[1], fill: b[2] });
  });

  line(svg, m5, "#2f2929", 3.4);
  line(svg, resample(m120, 1), "#e88a52", 4);
}

function ema(list, k) {
  var v = list[0][1];
  return list.map(function (p) {
    v = v + (p[1] - v) * k;
    return [p[0], v];
  });
}

function drawKdj() {
  var svg = document.getElementById("kdjChart");

  var a = [[45, 460], [50, 190], [58, 175], [65, 400], [85, 470], [100, 300], [108, 70], [118, 120], [125, 280], [135, 360], [150, 400], [152, 510], [165, 300], [172, 60], [185, 50], [190, 130], [205, 130], [225, 130], [230, 235], [240, 200], [250, 500], [262, 190], [270, 205], [285, 400], [300, 520], [330, 500], [340, 110], [352, 230], [375, 80], [395, 130], [400, 200], [420, 135], [430, 175], [438, 135], [455, 280], [465, 520], [487, 220], [500, 400], [510, 520], [520, 420], [545, 510], [570, 480], [588, 225], [600, 500], [620, 520], [635, 380], [645, 520], [655, 500], [665, 110], [683, 50], [690, 160], [710, 190], [730, 520], [745, 175], [755, 90], [770, 70], [780, 170], [800, 500], [818, 520], [830, 295], [845, 390], [855, 80], [870, 120], [880, 100], [890, 160], [905, 300], [930, 500], [940, 320], [950, 510], [968, 75], [980, 300], [1005, 520], [1030, 130], [1045, 520], [1065, 520], [1085, 450], [1095, 520], [1110, 185], [1125, 510], [1150, 510], [1165, 50], [1173, 20], [1187, 70], [1190, 170], [1200, 140], [1215, 285], [1228, 155], [1238, 240], [1250, 125]];
  var b = [[10, 180], [20, 500], [35, 460], [60, 510], [80, 370], [95, 400], [112, 45], [125, 90], [135, 300], [150, 520], [165, 200], [177, 90], [185, 300], [195, 520], [210, 420], [225, 510], [245, 110], [258, 45], [270, 200], [280, 520], [322, 520], [335, 100], [345, 170], [350, 400], [375, 440], [380, 510], [400, 95], [410, 520], [440, 520], [453, 245], [465, 500], [480, 520], [495, 270], [505, 245], [515, 300], [525, 490], [550, 500], [565, 150], [575, 50], [585, 50], [590, 160], [600, 340], [618, 445], [640, 150], [650, 90], [660, 130], [668, 410], [685, 140], [693, 120], [708, 260], [712, 520], [745, 480], [765, 170], [780, 95], [785, 140], [795, 140], [815, 510], [825, 195], [838, 390], [850, 215], [860, 400], [875, 500], [890, 470], [905, 100], [918, 50], [930, 160], [942, 460], [962, 100], [975, 210], [995, 120], [1010, 180], [1020, 490], [1035, 480], [1055, 215], [1065, 270], [1072, 110], [1085, 490], [1120, 480], [1140, 490], [1155, 265], [1175, 95], [1185, 95], [1195, 200], [1210, 100], [1220, 160], [1228, 135], [1240, 300]];
  var c = [[5, 490], [35, 490], [40, 270], [50, 260], [60, 60], [68, 60], [80, 180], [85, 240], [98, 135], [108, 385], [122, 150], [135, 100], [145, 160], [157, 320], [165, 205], [175, 235], [192, 145], [215, 270], [228, 125], [243, 300], [255, 190], [263, 275], [277, 100], [285, 205], [300, 135], [308, 175], [315, 125], [325, 200], [335, 145], [345, 330], [350, 470], [365, 470], [375, 200], [388, 75], [395, 130], [405, 160], [418, 300], [430, 490], [460, 490], [480, 180], [490, 45], [500, 40], [510, 300], [520, 490], [530, 420], [550, 490], [570, 500], [590, 160], [602, 40], [615, 130], [625, 100], [635, 110], [650, 330], [665, 350], [680, 100], [690, 130], [700, 230], [712, 125], [725, 125], [738, 300], [745, 270], [755, 405], [768, 120], [780, 170], [795, 410], [803, 220], [813, 400], [825, 190], [835, 140], [850, 105], [860, 150], [870, 465], [880, 455], [890, 205], [900, 270], [910, 445], [920, 490], [932, 490], [945, 320], [955, 320], [965, 200], [975, 70], [990, 70], [997, 125], [1015, 115]];

  var j = fromCrop(a, 0, 2360, 3, 3).concat(fromCrop(b, 420, 2360, 3, 3), fromCrop(c, 836, 2360, 3, 3));

  hline(svg, 2451, "#e6e6e6", "3 4");

  // K and D are slower than J, the troughs are pushed down so they still reach the bottom
  var source = resample(j, 0).map(function (p) { return [p[0], p[1] > 2470 ? p[1] + 70 : p[1]]; });
  var k = ema(source, 0.3);
  var d = ema(k, 0.4);
  k.push([1176, 2405]);
  d.push([1176, 2410]);
  line(svg, j, "#c2497f", 4);
  line(svg, k, "#2f2630", 3);
  line(svg, d, "#e5814a", 3.2);
}

drawPrice();
drawVolume();
drawKdj();
```
